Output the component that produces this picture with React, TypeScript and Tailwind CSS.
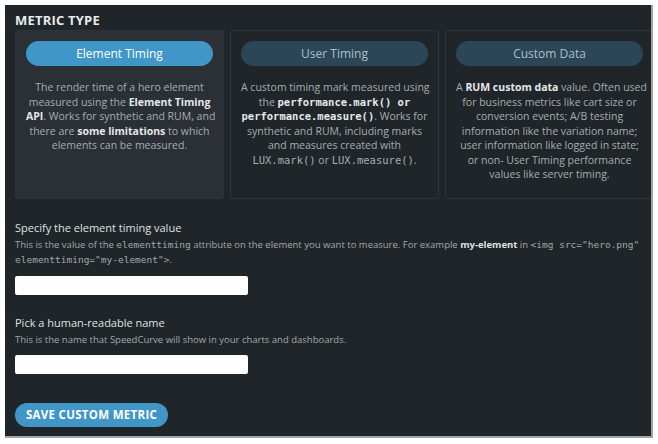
import React from "react";

const mono = { fontFamily: '"DejaVu Sans Mono", "Liberation Mono", monospace' };

function Card({
  selected,
  label,
  children,
}: {
  selected?: boolean;
  label: string;
  children: React.ReactNode;
}) {
  return (
    <div
      className={
        "w-[209px] shrink-0 h-[169px] rounded-[3px] border px-[10px] pt-[10px] " +
        (selected ? "bg-[#2a3035] border-[#2d3338]" : "bg-[#1f2528] border-[#2f3539]")
      }
    >
      <div
        className={
          "h-[25px] rounded-full flex items-center justify-center text-[12px] " +
          (selected ? "bg-[#4196c8] text-white" : "bg-[#2b4657] text-[#aebfc8]")
        }
      >
        {label}
      </div>
      <div className="mt-[14px] text-center text-[10.5px] leading-[14.5px] text-[#a7adb0] whitespace-nowrap">
        {children}
      </div>
    </div>
  );
}

export default function App() {
  return (
    <div
      className="w-[658px] h-[444px] bg-white pt-[5px] pl-[5px]"
      style={{ fontFamily: '"Open Sans", "Liberation Sans", sans-serif' }}
    >
      <div className="w-[648px] h-[433px] bg-[#1f2528] border-r-2 border-b-2 border-[#a0a4a6] overflow-hidden pl-[10px]">
        <div className="pt-[6px] h-[25px] text-[13px] font-bold text-[#e8eaeb] tracking-[0.2px] leading-[18px]">
          METRIC TYPE
        </div>
        <div className="flex gap-[6px]">
          <Card selected label="Element Timing">
            The render time of a hero element
            <br />
            measured using the <b className="text-[#e6e8e9]">Element Timing</b>
            <br />
            <b className="text-[#e6e8e9]">API</b>. Works for synthetic and RUM, and
            <br />
            there are <b className="text-[#e6e8e9]">some limitations</b> to which
            <br />
            elements can be measured.
          </Card>
          <Card label="User Timing">
            A custom timing mark measured using
            <br />
            the{" "}
            <b className="text-[#e6e8e9] leading-none" style={mono}>
              performance.mark() or
            </b>
            <br />
            <b className="text-[#e6e8e9] leading-none" style={mono}>
              performance.measure()
            </b>
            . Works for
            <br />
            synthetic and RUM, including marks
            <br />
            and measures created with
            <br />
            <span className="leading-none" style={mono}>LUX.mark()</span> or{" "}
            <span className="leading-none" style={mono}>LUX.measure()</span>.
          </Card>
          <Card label="Custom Data">
            A <b className="text-[#e6e8e9]">RUM custom data</b> value. Often used
            <br />
            for business metrics like cart size or
            <br />
            conversion events; A/B testing
            <br />
            information like the variation name;
            <br />
            user information like logged in state;
            <br />
            or non- User Timing performance
            <br />
            values like server timing.
          </Card>
        </div>

        <div className="mt-[22px] text-[11px] leading-[14px] text-[#dfe2e3]">
          Specify the element timing value
        </div>
        <div className="mt-[2px] text-[9.5px] leading-[15px] text-[#a2a8ab] w-[630px]">
          This is the value of the <span className="leading-none" style={mono}>elementtiming</span> attribute on the
          element you want to measure. For example <b className="text-[#dfe2e3]">my-element</b> in{" "}
          <span className="leading-none" style={mono}>
            &lt;img src="hero.png" elementtiming="my-element"&gt;
          </span>
          .
        </div>
        <input
          className="mt-[9px] block w-[233px] h-[19px] bg-white rounded-[2px] outline-none"
          aria-label="element timing value"
        />

        <div className="mt-[21px] text-[11px] leading-[14px] text-[#dfe2e3]">Pick a human-readable name</div>
        <div className="mt-[2px] text-[9.5px] leading-[15px] text-[#a2a8ab]">
          This is the name that SpeedCurve will show in your charts and dashboards.
        </div>
        <input
          className="mt-[8px] block w-[233px] h-[19px] bg-white rounded-[2px] outline-none"
          aria-label="human-readable name"
        />

        <button className="mt-[29px] w-[153px] h-[24px] rounded-full bg-[#4196c8] text-white text-[11.5px] font-bold tracking-[0.3px]">
          SAVE CUSTOM METRIC
        </button>
      </div>
    </div>
  );
}
